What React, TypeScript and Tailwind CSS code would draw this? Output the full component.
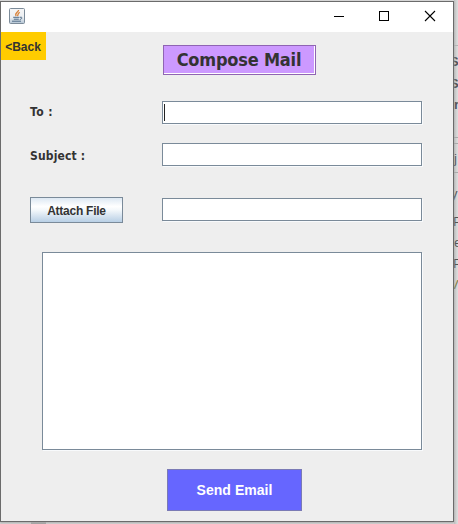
import React from "react";

function JavaIcon() {
  return (
    <svg width="16" height="16" viewBox="0 0 16 16" className="shrink-0">
      <defs>
        <linearGradient id="tile" x1="0" y1="0" x2="0" y2="1">
          <stop offset="0" stopColor="#f6f6f6" />
          <stop offset="0.6" stopColor="#eceff2" />
          <stop offset="1" stopColor="#b3c4d4" />
        </linearGradient>
      </defs>
      <rect x="0.5" y="0.5" width="15" height="15" rx="1" fill="url(#tile)" stroke="#7c8b99" />
      <path d="M9.6 2C9.6 4.3 5 5 7.2 8M10.8 4.3C8.2 5.2 9.8 6.3 8.4 8" fill="none" stroke="#d9823a" strokeWidth="1.3" />
      <path d="M4.2 9.3H10.5M4.8 11.2H9.8M3 13.2H12M11 9.3C13.8 8.6 13.4 11 10.8 11.5" fill="none" stroke="#4f6b86" strokeWidth="1" />
    </svg>
  );
}

function TitleBar() {
  return (
    <header className="flex h-[30px] shrink-0 justify-between bg-white pl-2">
      <div className="pt-[6px]">
        <JavaIcon />
      </div>
      <svg width="137" height="30" viewBox="0 0 137 30" fill="none" stroke="#000" shapeRendering="crispEdges">
        <path d="M18 14.5h10" />
        <rect x="63.5" y="9.5" width="9" height="9" />
        <path d="M109 9l10 10M119 9l-10 10" shapeRendering="auto" strokeWidth="1.1" />
      </svg>
    </header>
  );
}

function Field({ focused = false }: { focused?: boolean }) {
  return (
    <div className="flex h-[23px] w-[260px] border border-[#7a8a99] bg-white py-[2px] pl-px shadow-[1px_1px_0_#f8fafc]">
      {focused && <span className="h-[17px] w-px bg-[#222]" />}
    </div>
  );
}

const labelClass =
  "w-[132px] font-['DejaVu_Sans_Condensed','DejaVu_Sans',sans-serif] text-[12px] leading-[15px] font-bold text-[#333]";

const fragments = [
  { text: "S", place: "top-[52px] -left-[4px] font-bold" },
  { text: "S", place: "top-[74px] -left-[4px] font-bold" },
  { text: "r", place: "top-[95px] left-0 font-bold" },
  { text: "j", place: "top-[149px] left-0" },
  { text: "y", place: "top-[184px] -left-[3px]" },
  { text: "P", place: "top-[212px] -left-px" },
  { text: "e", place: "top-[233px] left-0" },
  { text: "P", place: "top-[254px] -left-px" },
  { text: "V", place: "top-[275px] -left-[4px] text-[#82814a]" },
];

export default function App() {
  return (
    <div className="relative h-[524px] w-[458px] overflow-hidden bg-[#d9d9d9] pt-px font-['Liberation_Sans',Arial,sans-serif]">
      <div className="absolute top-0 right-0 h-[524px] w-1 bg-gradient-to-r from-[#c2c2c2] to-[#dedede] text-[13px] leading-[20px] text-[#555]">
        {fragments.map((f, i) => (
          <span key={i} className={`absolute ${f.place}`}>{f.text}</span>
        ))}
        <span className="absolute top-[45px] right-0 h-px w-1 bg-[#b5b5b5]" />
        <span className="absolute top-[137px] right-0 h-px w-1 bg-[#aaa]" />
        <span className="absolute top-[143px] right-0 h-px w-1 bg-[#aaa]" />
        <span className="absolute top-[172px] right-0 h-px w-1 bg-[#aaa]" />
      </div>
      <div className="absolute bottom-0 left-[31px] h-[2px] w-[15px] bg-[#a3a3a3]" />
      <div className="relative flex h-[521px] w-[454px] flex-col border border-[#6b6b6b] bg-[#eee] shadow-[0_1px_2px_#aaa]">
        <TitleBar />
        <main className="flex flex-1 flex-col">
          <div className="flex h-[69px] items-start">
            <button className="h-7 w-[45px] bg-[#ffcc00] pt-[2px] pr-px text-[12px] leading-[26px] font-bold text-[#333]">&lt;Back</button>
            <div className="mt-[13px] ml-[117px] h-[30px] w-[153px] border border-[#8f64b3]">
              <h1 className="h-7 w-[151px] border-r border-b border-white bg-[#cc99ff] text-center font-['DejaVu_Sans_Condensed','DejaVu_Sans',sans-serif] text-[18px] leading-[27px] font-bold tracking-[-0.2px] whitespace-nowrap text-[#333]">
                Compose Mail
              </h1>
            </div>
          </div>
          <div className="flex h-[42px] items-start pl-[29px]">
            <label className={`${labelClass} pt-[4px] tracking-[0.4px]`}>To :</label>
            <Field focused />
          </div>
          <div className="flex h-[54px] items-start pl-[29px]">
            <label className={`${labelClass} pt-[6px] tracking-[0.15px]`}>Subject :</label>
            <Field />
          </div>
          <div className="flex h-[55px] items-start pl-[29px]">
            <button className="mr-[39px] h-[26px] w-[93px] border border-[#7a8a99] bg-[linear-gradient(to_bottom,#dde8f3_0%,#ffffff_35%,#f4f8fb_50%,#b8cfe5_100%)] pt-[2px] text-[12px] leading-[22px] font-bold tracking-[-0.25px] text-[#333]">
              Attach File
            </button>
            <div className="pt-px">
              <Field />
            </div>
          </div>
          <div className="ml-[41px] h-[198px] w-[380px] border border-[#7a8a99] bg-white shadow-[1px_1px_0_#f8fafc]" />
          <button className="mt-[19px] ml-[166px] h-[42px] w-[135px] border border-[#7a7ab5] bg-[#6666ff] text-[14px] leading-10 font-bold tracking-[0.05px] text-white">
            Send Email
          </button>
        </main>
      </div>
    </div>
  );
}
